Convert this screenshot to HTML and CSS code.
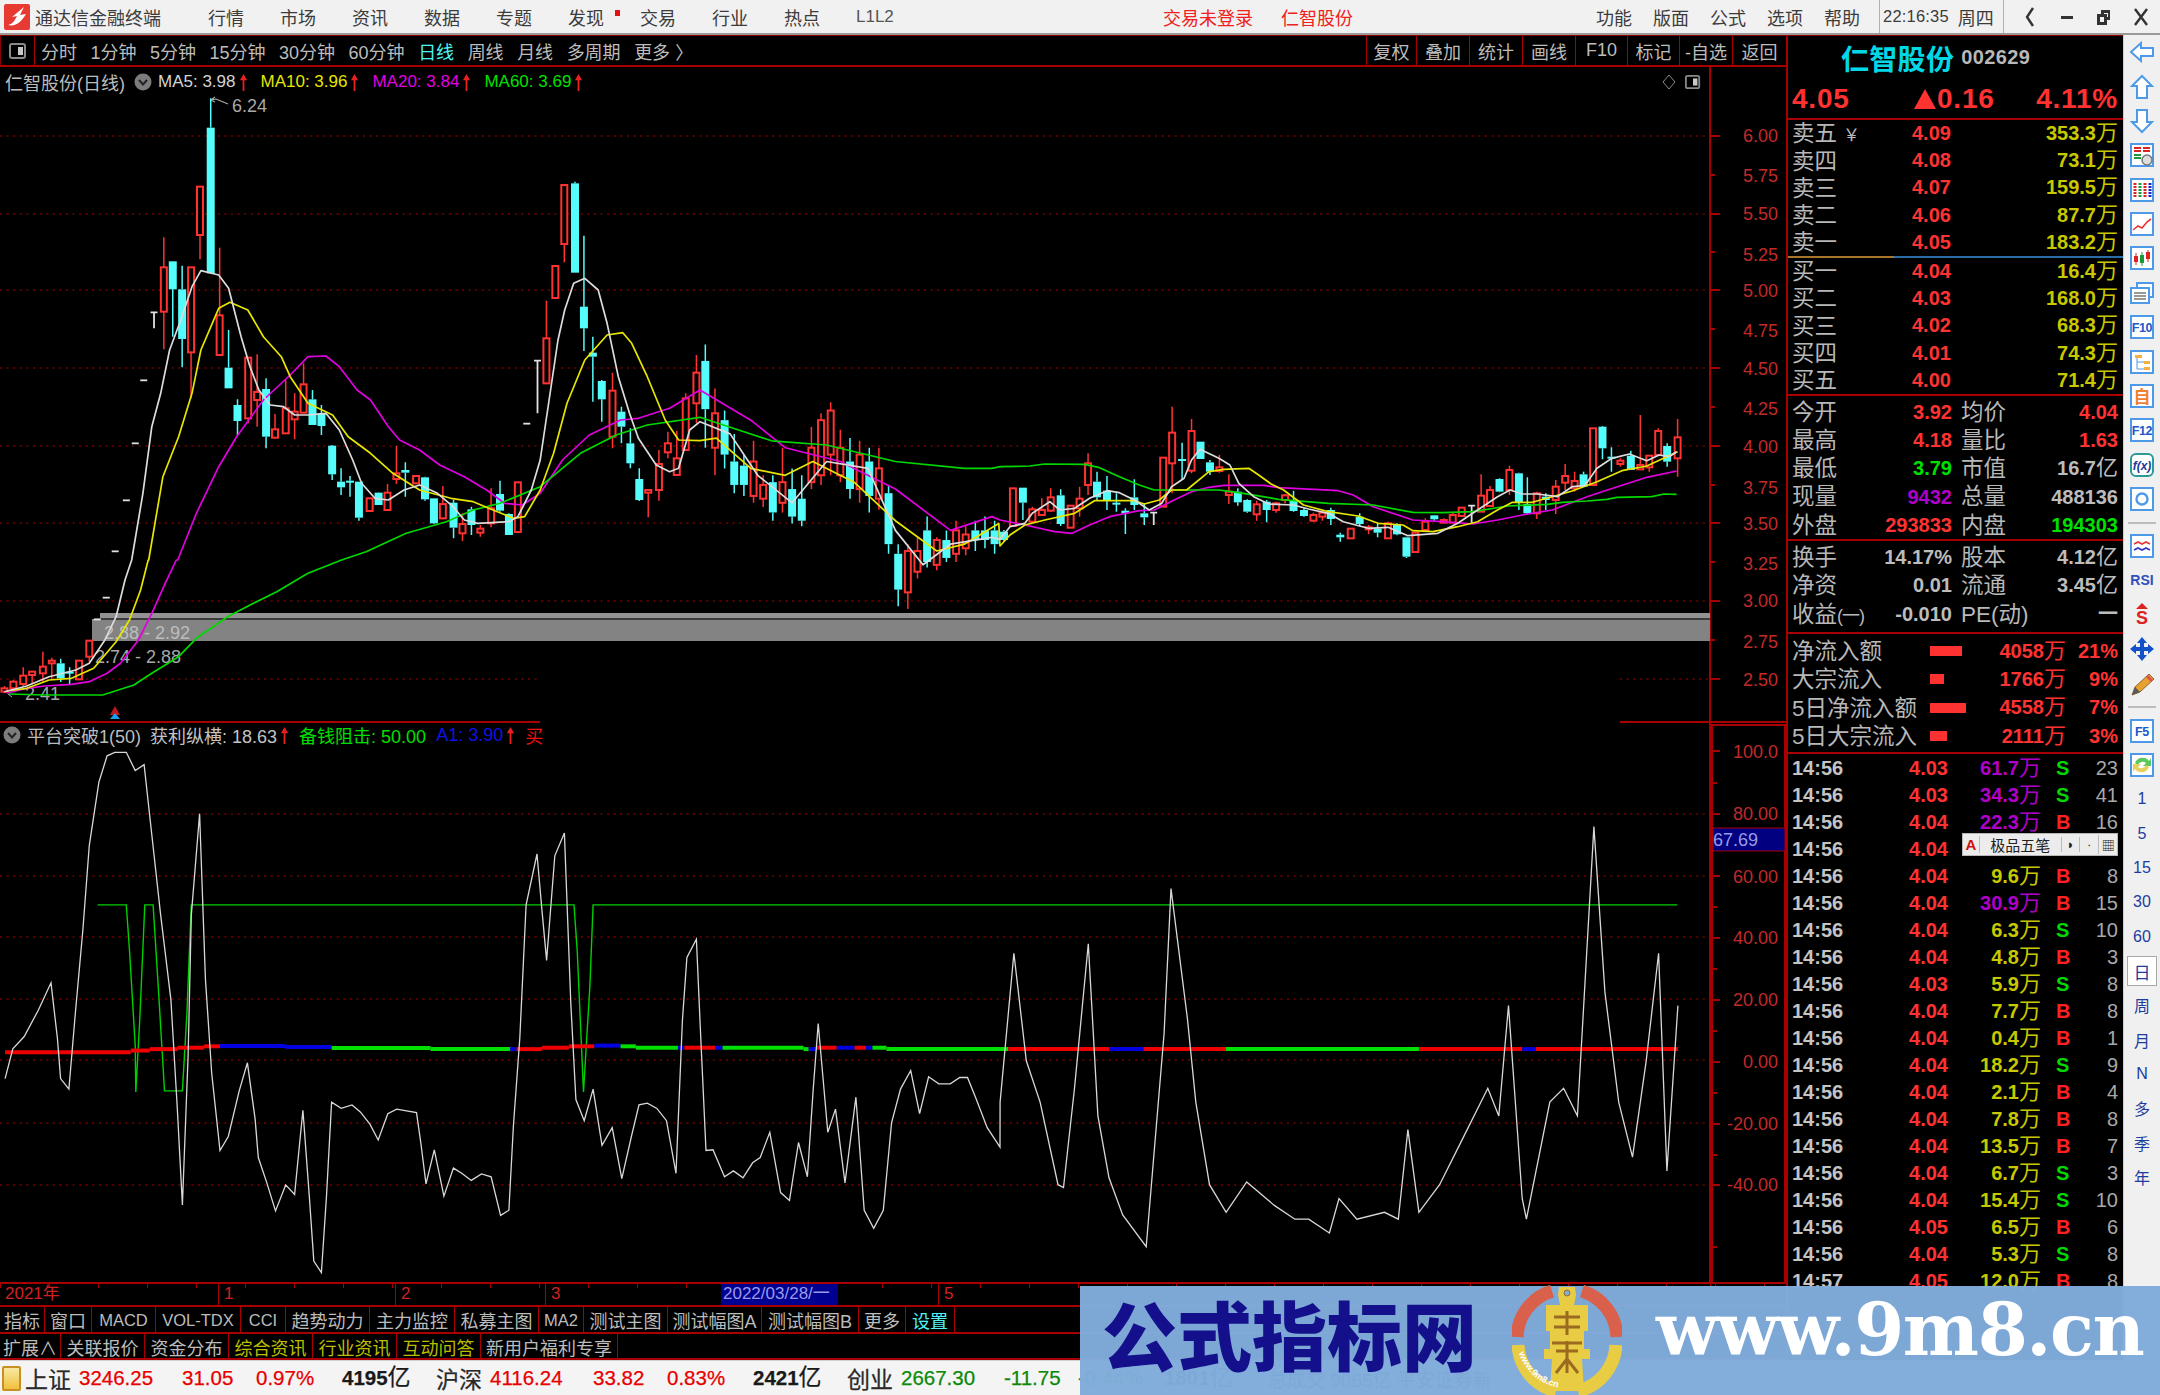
FILE: index.html
```html
<!DOCTYPE html>
<html lang="zh-CN">
<head>
<meta charset="utf-8">
<title>通达信金融终端</title>
<link rel="stylesheet" href="styles.css">
</head>
<body>
<svg class="defs" width="0" height="0" aria-hidden="true">
  <defs>
    <symbol id="up" viewBox="0 0 10 20"><path d="M5 1 L9 8 H6 V20 H4 V8 H1 Z" fill="#e82020"/></symbol>
    <symbol id="fold" viewBox="0 0 18 18"><circle cx="9" cy="9" r="8.5" fill="#7c7c7c"/><path d="M5 7 L9 11.5 L13 7" fill="none" stroke="#222" stroke-width="2"/></symbol>
    <symbol id="frame" viewBox="0 0 26 26"><rect x="2" y="2" width="22" height="22" fill="#fff" stroke="#4d9be8" stroke-width="2"/></symbol>
  </defs>
</svg>
<div class="app">
  <header class="titlebar">
    <svg class="logo" viewBox="0 0 26 26"><rect width="26" height="26" rx="2" fill="#e63a32"/><path d="M4 21 C9 20 11 16 13 12 L8 13 L20 3 L16 11 L22 10 C18 17 12 23 4 21 Z" fill="#fff"/></svg>
    <span class="appname">通达信金融终端</span>
    <nav class="menu">
      <span>行情</span><span>市场</span><span>资讯</span><span>数据</span><span>专题</span><span class="dot">发现</span><span>交易</span><span>行业</span><span>热点</span><span class="l1">L1L2</span>
    </nav>
    <span class="warn w1">交易未登录</span>
    <span class="warn w2">仁智股份</span>
    <nav class="menu2"><span>功能</span><span>版面</span><span>公式</span><span>选项</span><span>帮助</span></nav>
    <div class="clock"><span>22:16:35</span><span>周四</span></div>
    <div class="winbtns">
      <svg viewBox="0 0 16 24"><path d="M11 3 L5 12 L11 21" fill="none" stroke="#333" stroke-width="2.4"/></svg>
      <svg viewBox="0 0 16 24"><rect x="2" y="11" width="12" height="3" fill="#333"/></svg>
      <svg viewBox="0 0 16 24"><path d="M5 5 H14 V15 H11 V20 H1 V9 H5 Z M4 12 V17 H8 V12 Z M8 8 V9 H11 V12 H12 V8 Z" fill="#333" fill-rule="evenodd"/></svg>
      <svg viewBox="0 0 16 24"><path d="M2 4 L14 20 M14 4 L2 20" stroke="#333" stroke-width="2.4"/></svg>
    </div>
  </header>

  <div class="workspace">
    <main class="main">
      <div class="toolbar">
        <div class="tb-icon"><svg viewBox="0 0 18 18"><rect x="1" y="2" width="15" height="14" rx="2" fill="none" stroke="#8a8a8a" stroke-width="2"/><rect x="9" y="5" width="5" height="8" fill="#c8c8c8"/></svg></div>
        <div class="tb-tabs">
          <span>分时</span><span>1分钟</span><span>5分钟</span><span>15分钟</span><span>30分钟</span><span>60分钟</span><span class="on">日线</span><span>周线</span><span>月线</span><span>多周期</span><span>更多 〉</span>
        </div>
        <div class="tb-right">
          <span>复权</span><span>叠加</span><span>统计</span><span>画线</span><span>F10</span><span>标记</span><span>-自选</span><span>返回</span>
        </div>
      </div>

      <div class="chart">
        <svg id="kchart" class="chart-svg" viewBox="0 67 1786 1215" preserveAspectRatio="none">
          <path class="grid" d="M0 136H1710M0 214H1710M0 290H1710M0 368H1710M0 446H1710M0 523H1710M0 601H1710M0 679H540M1620 679H1710"/>
          <path class="grid" d="M0 814H1710M0 876H1710M0 937H1710M0 999H1710M0 1060H1710M0 1123H1710M0 1185H1710"/>
          <path class="axis" d="M1710 67V1282"/>
          <path class="axis" d="M1711 136h9M1711 214h9M1711 290h9M1711 368h9M1711 446h9M1711 523h9M1711 601h9M1711 679h9M1711 175h4M1711 252h4M1711 329h4M1711 407h4M1711 485h4M1711 562h4M1711 640h4"/>
          <path class="axis" d="M0 722H540M1620 722H1786"/>
          <rect class="axisbox" x="1712" y="725" width="73" height="558"/>
          <path class="axis" d="M1713 751h7M1713 814h7M1713 876h7M1713 938h7M1713 1000h7M1713 1062h7M1713 1124h7M1713 1185h7M1713 783h4M1713 845h4M1713 907h4M1713 969h4M1713 1031h4M1713 1093h4M1713 1155h4M1713 1247h4"/>

          <g class="band">
            <rect class="band-light" x="100" y="613" width="1610" height="5"/>
            <rect class="band-dark" x="100" y="618" width="1610" height="2"/>
            <rect class="band-main" x="92" y="620" width="1618" height="21"/>
            <rect class="band-light" x="92" y="619" width="8" height="2"/>
          </g>
          <text class="bandlbl" x="104" y="639">2.88 - 2.92</text>
          <text class="marklbl" x="95" y="663">2.74 - 2.88</text>
          <text class="marklbl" x="25" y="700">2.41</text>
          <text class="marklbl" x="232" y="112">6.24</text>
          <path class="markline" d="M211 100L216 99L228 104M211 100L215 97M211 100L215 102"/>
          <path class="marklinet" d="M8 694L12 697"/>

          <g id="candles"></g>
          <g id="lines"></g>

          <path class="sig-r" d="M115 706L120 715H110Z"/>
          <path class="sig-b" d="M115 713L120 719H110Z"/>

          <g class="axlbl">
            <text x="1778" y="142">6.00</text><text x="1778" y="182">5.75</text><text x="1778" y="220">5.50</text><text x="1778" y="261">5.25</text><text x="1778" y="297">5.00</text><text x="1778" y="337">4.75</text><text x="1778" y="375">4.50</text><text x="1778" y="415">4.25</text><text x="1778" y="453">4.00</text><text x="1778" y="494">3.75</text><text x="1778" y="530">3.50</text><text x="1778" y="570">3.25</text><text x="1778" y="607">3.00</text><text x="1778" y="648">2.75</text><text x="1778" y="686">2.50</text>
            <text x="1778" y="758">100.0</text><text x="1778" y="820">80.00</text><text x="1778" y="883">60.00</text><text x="1778" y="944">40.00</text><text x="1778" y="1006">20.00</text><text x="1778" y="1068">0.00</text><text x="1778" y="1130">-20.00</text><text x="1778" y="1191">-40.00</text>
          </g>
          <rect class="lastbox" x="1713" y="828" width="72" height="23"/>
          <text class="lastlbl" x="1713" y="846">67.69</text>
        </svg>

        <div class="legend legend-top">
          <span class="lg-title">仁智股份(日线)</span>
          <svg class="fold"><use href="#fold"/></svg>
          <span class="lg-item c-white">MA5: 3.98<svg class="uparr"><use href="#up"/></svg></span>
          <span class="lg-item c-yellow">MA10: 3.96<svg class="uparr"><use href="#up"/></svg></span>
          <span class="lg-item c-magenta">MA20: 3.84<svg class="uparr"><use href="#up"/></svg></span>
          <span class="lg-item c-green">MA60: 3.69<svg class="uparr"><use href="#up"/></svg></span>
        </div>
        <div class="legend-ctl">
          <svg viewBox="0 0 14 16"><path d="M7 1 L13 8 L7 15 L1 8 Z" fill="none" stroke="#8a8a8a"/></svg>
          <svg viewBox="0 0 18 18"><rect x="1" y="2" width="15" height="14" rx="2" fill="none" stroke="#8a8a8a" stroke-width="2"/><rect x="9" y="5" width="5" height="8" fill="#c8c8c8"/></svg>
        </div>
        <div class="legend legend-sub">
          <svg class="fold"><use href="#fold"/></svg>
          <span class="lg-title">平台突破1(50)</span>
          <span class="lg-item c-gray">获利纵横: 18.63<svg class="uparr"><use href="#up"/></svg></span>
          <span class="lg-item c-green">备钱阻击: 50.00</span>
          <span class="lg-item c-blue">A1: 3.90<svg class="uparr"><use href="#up"/></svg></span>
          <span class="c-red">买</span>
        </div>
      </div>

      <div class="timeaxis">
        <span>2021年</span><span>1</span><span>2</span><span>3</span><span class="datebox">2022/03/28/一</span><span class="blank"></span><span>5</span><span class="fill"></span><span class="axisend"></span>
      </div>
      <div class="tabrow tabs-a">
        <span>指标</span><span>窗口</span><span>MACD</span><span>VOL-TDX</span><span>CCI</span><span>趋势动力</span><span>主力监控</span><span>私募主图</span><span>MA2</span><span>测试主图</span><span>测试幅图A</span><span>测试幅图B</span><span>更多</span><span class="cy">设置</span>
      </div>
      <div class="tabrow tabs-b">
        <span>扩展∧</span><span>关联报价</span><span>资金分布</span><span class="ol">综合资讯</span><span class="ol">行业资讯</span><span class="ol">互动问答</span><span>新用户福利专享</span>
      </div>
    </main>

    <aside class="quote">
      <div class="q-name"><span class="q-cn">仁智股份</span><span class="q-code">002629</span></div>
      <div class="q-price"><span>4.05</span><span class="q-chg"><i class="tri"></i>0.16</span><span>4.11%</span></div>

      <section class="book">
        <div class="brow"><b>卖五<small>￥</small></b><em>4.09</em><span>353.3<u>万</u></span></div>
        <div class="brow"><b>卖四</b><em>4.08</em><span>73.1<u>万</u></span></div>
        <div class="brow"><b>卖三</b><em>4.07</em><span>159.5<u>万</u></span></div>
        <div class="brow"><b>卖二</b><em>4.06</em><span>87.7<u>万</u></span></div>
        <div class="brow"><b>卖一</b><em>4.05</em><span>183.2<u>万</u></span></div>
        <div class="bdiv"></div>
        <div class="brow"><b>买一</b><em>4.04</em><span>16.4<u>万</u></span></div>
        <div class="brow"><b>买二</b><em>4.03</em><span>168.0<u>万</u></span></div>
        <div class="brow"><b>买三</b><em>4.02</em><span>68.3<u>万</u></span></div>
        <div class="brow"><b>买四</b><em>4.01</em><span>74.3<u>万</u></span></div>
        <div class="brow"><b>买五</b><em>4.00</em><span>71.4<u>万</u></span></div>
      </section>

      <section class="stats s5">
        <b>今开</b><em class="r">3.92</em><b>均价</b><em class="r">4.04</em>
        <b>最高</b><em class="r">4.18</em><b>量比</b><em class="r">1.63</em>
        <b>最低</b><em class="g">3.79</em><b>市值</b><em class="w">16.7<u>亿</u></em>
        <b>现量</b><em class="p">9432</em><b>总量</b><em class="w">488136</em>
        <b>外盘</b><em class="r">293833</em><b>内盘</b><em class="g">194303</em>
      </section>
      <section class="stats s3">
        <b>换手</b><em class="w">14.17%</em><b>股本</b><em class="w">4.12<u>亿</u></em>
        <b>净资</b><em class="w">0.01</em><b>流通</b><em class="w">3.45<u>亿</u></em>
        <b>收益<small>(一)</small></b><em class="w">-0.010</em><b>PE(动)</b><em class="w">一</em>
      </section>

      <section class="flow">
        <div class="frow"><b>净流入额</b><i class="bar b32"></i><span>4058<u>万</u></span><span>21%</span></div>
        <div class="frow"><b>大宗流入</b><i class="bar b14"></i><span>1766<u>万</u></span><span>9%</span></div>
        <div class="frow"><b>5日净流入额</b><i class="bar b36"></i><span>4558<u>万</u></span><span>7%</span></div>
        <div class="frow"><b>5日大宗流入</b><i class="bar b17"></i><span>2111<u>万</u></span><span>3%</span></div>
      </section>

      <section class="trades">
        <div class="trow"><b>14:56</b><em>4.03</em><span class="pu">61.7<u>万</u></span><i class="s">S</i><small>23</small></div>
        <div class="trow"><b>14:56</b><em>4.03</em><span class="pu">34.3<u>万</u></span><i class="s">S</i><small>41</small></div>
        <div class="trow"><b>14:56</b><em>4.04</em><span class="pu">22.3<u>万</u></span><i>B</i><small>16</small></div>
        <div class="trow"><b>14:56</b><em>4.04</em></div>
        <div class="trow"><b>14:56</b><em>4.04</em><span>9.6<u>万</u></span><i>B</i><small>8</small></div>
        <div class="trow"><b>14:56</b><em>4.04</em><span class="pu">30.9<u>万</u></span><i>B</i><small>15</small></div>
        <div class="trow"><b>14:56</b><em>4.04</em><span>6.3<u>万</u></span><i class="s">S</i><small>10</small></div>
        <div class="trow"><b>14:56</b><em>4.04</em><span>4.8<u>万</u></span><i>B</i><small>3</small></div>
        <div class="trow"><b>14:56</b><em>4.03</em><span>5.9<u>万</u></span><i class="s">S</i><small>8</small></div>
        <div class="trow"><b>14:56</b><em>4.04</em><span>7.7<u>万</u></span><i>B</i><small>8</small></div>
        <div class="trow"><b>14:56</b><em>4.04</em><span>0.4<u>万</u></span><i>B</i><small>1</small></div>
        <div class="trow"><b>14:56</b><em>4.04</em><span>18.2<u>万</u></span><i class="s">S</i><small>9</small></div>
        <div class="trow"><b>14:56</b><em>4.04</em><span>2.1<u>万</u></span><i>B</i><small>4</small></div>
        <div class="trow"><b>14:56</b><em>4.04</em><span>7.8<u>万</u></span><i>B</i><small>8</small></div>
        <div class="trow"><b>14:56</b><em>4.04</em><span>13.5<u>万</u></span><i>B</i><small>7</small></div>
        <div class="trow"><b>14:56</b><em>4.04</em><span>6.7<u>万</u></span><i class="s">S</i><small>3</small></div>
        <div class="trow"><b>14:56</b><em>4.04</em><span>15.4<u>万</u></span><i class="s">S</i><small>10</small></div>
        <div class="trow"><b>14:56</b><em>4.05</em><span>6.5<u>万</u></span><i>B</i><small>6</small></div>
        <div class="trow"><b>14:56</b><em>4.04</em><span>5.3<u>万</u></span><i class="s">S</i><small>8</small></div>
        <div class="trow"><b>14:57</b><em>4.05</em><span>12.0<u>万</u></span><i>B</i><small>8</small></div>
      </section>
    </aside>

    <nav class="iconbar">
      <svg class="ic" viewBox="0 0 26 26"><path d="M2 13 L12 4 V9 H24 V17 H12 V22 Z" fill="#fff" stroke="#4d9be8" stroke-width="2"/></svg>
      <svg class="ic" viewBox="0 0 26 26"><path d="M13 2 L23 12 H18 V24 H8 V12 H3 Z" fill="#fff" stroke="#4d9be8" stroke-width="2"/></svg>
      <svg class="ic" viewBox="0 0 26 26"><path d="M13 24 L23 14 H18 V2 H8 V14 H3 Z" fill="#fff" stroke="#4d9be8" stroke-width="2"/></svg>
      <svg class="ic" viewBox="0 0 26 26"><use href="#frame"/><path d="M5 6h7M5 9h7M14 6h7M14 9h7" stroke="#d22" stroke-width="2"/><path d="M5 13h7M5 16h7" stroke="#1a9a3a" stroke-width="2"/><circle cx="18" cy="18" r="5" fill="#ddd" stroke="#777" stroke-width="1.5"/></svg>
      <svg class="ic" viewBox="0 0 26 26"><use href="#frame"/><path d="M6 6V20" stroke="#d22" stroke-width="3" stroke-dasharray="2 1"/><path d="M11 6V20" stroke="#1a9a3a" stroke-width="3" stroke-dasharray="2 1"/><path d="M16 6V20" stroke="#d22" stroke-width="3" stroke-dasharray="2 1"/><path d="M21 6V20" stroke="#22c" stroke-width="3" stroke-dasharray="2 1"/></svg>
      <svg class="ic" viewBox="0 0 26 26"><use href="#frame"/><path d="M4 19 L9 15 L13 17 L18 11 L22 8" fill="none" stroke="#e33" stroke-width="1.6"/></svg>
      <svg class="ic" viewBox="0 0 26 26"><use href="#frame"/><path d="M7 8V20M19 5V17" stroke="#d22"/><path d="M13 7V21" stroke="#1a9a3a"/><rect x="5" y="11" width="4" height="6" fill="#d22"/><rect x="11" y="10" width="4" height="8" fill="#1a9a3a"/><rect x="17" y="7" width="4" height="7" fill="#d22"/></svg>
      <svg class="ic" viewBox="0 0 26 26"><path d="M8 7V3H24V17H20" fill="#fff" stroke="#4d9be8" stroke-width="2"/><rect x="2" y="8" width="18" height="15" fill="#fff" stroke="#4d9be8" stroke-width="2"/><path d="M5 13h12M5 16h12M5 19h12" stroke="#777" stroke-width="1.5"/></svg>
      <svg class="ic" viewBox="0 0 26 26"><use href="#frame"/><text class="ic-t" x="13" y="18">F10</text></svg>
      <svg class="ic" viewBox="0 0 26 26"><use href="#frame"/><path d="M6 6H13V9H6ZM15 12H21V15H15ZM15 18H21V21H15Z" fill="#f5b040"/><path d="M8 9V20H15M8 13H15" fill="none" stroke="#4d9be8"/></svg>
      <svg class="ic" viewBox="0 0 26 26"><use href="#frame"/><text class="ic-z" x="13" y="20">自</text></svg>
      <svg class="ic" viewBox="0 0 26 26"><use href="#frame"/><text class="ic-t" x="13" y="18">F12</text></svg>
      <svg class="ic" viewBox="0 0 26 26"><rect x="2" y="2" width="22" height="22" rx="5" fill="#fff" stroke="#2a9a9a" stroke-width="2"/><text class="ic-fx" x="13" y="18">f(x)</text></svg>
      <svg class="ic" viewBox="0 0 26 26"><use href="#frame"/><circle cx="13" cy="13" r="5.5" fill="none" stroke="#4d9be8" stroke-width="2.4"/></svg>
      <i class="ic-sep"></i>
      <svg class="ic" viewBox="0 0 26 26"><use href="#frame"/><path d="M5 11 L9 9 L13 11 L17 9 L21 11" fill="none" stroke="#e33" stroke-width="1.6"/><path d="M5 17 L9 15 L13 17 L17 15 L21 17" fill="none" stroke="#33c" stroke-width="1.6"/></svg>
      <svg class="ic" viewBox="0 0 26 26"><text class="ic-rsi" x="13" y="18">RSI</text></svg>
      <svg class="ic" viewBox="0 0 26 26"><path d="M13 1 L19 7 H7 Z" fill="#d22"/><text class="ic-s" x="13" y="22">S</text></svg>
      <svg class="ic" viewBox="0 0 26 26"><path d="M13 1 L18 7 H15 V11 H19 V8 L25 13 L19 18 V15 H15 V19 H18 L13 25 L8 19 H11 V15 H7 V18 L1 13 L7 8 V11 H11 V7 H8 Z" fill="#1450c8"/></svg>
      <svg class="ic" viewBox="0 0 26 26"><path d="M3 24 L6 16 L20 3 L25 8 L11 21 Z" fill="#e8a030" stroke="#8a6a30"/><path d="M3 24 L6 16 L11 21 Z" fill="#5a5a5a"/><path d="M18 5 L23 10" stroke="#e05050" stroke-width="3"/></svg>
      <i class="ic-sep"></i>
      <svg class="ic" viewBox="0 0 26 26"><use href="#frame"/><text class="ic-t" x="13" y="18">F5</text></svg>
      <svg class="ic" viewBox="0 0 26 26"><use href="#frame"/><path d="M6 11 A8 8 0 0 1 20 9 L22 6 V14 H14 L17 11 A5 5 0 0 0 9 13 Z" fill="#5ac85a"/><path d="M20 15 A8 8 0 0 1 6 17 L4 20 V12 H12 L9 15 A5 5 0 0 0 17 13 Z" fill="#e8d060"/></svg>
      <span class="per">1</span><span class="per">5</span><span class="per">15</span><span class="per">30</span><span class="per">60</span>
      <span class="per per-on">日</span><span class="per">周</span><span class="per">月</span><span class="per">N</span><span class="per">多</span><span class="per">季</span><span class="per">年</span>
    </nav>
  </div>

  <footer class="status">
    <i class="s-icon"></i>
    <span class="s-name">上证</span><span class="s-idx up">3246.25</span><span class="s-chg up">31.05</span><span class="s-pct up">0.97%</span><span class="s-amt">4195<u>亿</u></span>
    <span class="s-name">沪深</span><span class="s-idx up">4116.24</span><span class="s-chg up">33.82</span><span class="s-pct up">0.83%</span><span class="s-amt">2421<u>亿</u></span>
    <span class="s-name">创业</span><span class="s-idx dn">2667.30</span><span class="s-chg dn">-11.75</span><span class="s-pct dn">-0.44%</span><span class="s-amt">1801<u>亿</u></span>
    <span class="s-tail">总成交 9065亿 平安证券新</span>
  </footer>

  <div class="ime">
    <span class="ime-a">A</span><span class="ime-t">极品五笔</span><span class="ime-b">◗</span><span class="ime-b">∙</span><span class="ime-b">▦</span>
  </div>

  <div class="banner">
    <span class="bn-title">公式指标网</span>
    <svg class="bn-logo" viewBox="0 0 110 110">
      <path class="lg-r" d="M5 52 A50 50 0 0 1 40 6"/>
      <path class="lg-r" d="M105 52 A50 50 0 0 0 70 6"/>
      <path class="lg-y" d="M6 60 A50 50 0 0 0 44 106"/>
      <path class="lg-y" d="M104 60 A50 50 0 0 1 66 106"/>
      <path class="lg-fig" d="M47 2 H63 L64 10 L62 20 H76 V46 H72 V64 H78 V74 H70 L72 106 H38 L40 74 H32 V64 H38 V46 H34 V20 H48 L46 10 Z"/>
      <path class="lg-fig2" d="M42 32 H68 M42 42 H68 M55 26 V50 M40 58 H70 M44 66 H66 M55 56 V88 M44 88 L55 74 L66 88"/>
      <circle class="lg-head" cx="55" cy="8" r="3"/>
      <defs><path id="lgarc" d="M7 68 A50 50 0 0 0 44 102"/></defs>
      <text class="lg-txt"><textPath href="#lgarc">www.9m8.cn</textPath></text>
    </svg>
    <span class="bn-url">www.9m8.cn</span>
  </div>
</div>
<script src="chart.js"></script>
</body>
</html>
```

FILE: styles.css
```css
* { box-sizing: border-box; }
html, body { margin: 0; padding: 0; background: #000; }
body { width: 2160px; height: 1395px; overflow: hidden; font-family: "Liberation Sans", "Noto Sans CJK SC", sans-serif; }
.defs { position: absolute; }
i, em, b, u, small { font-style: normal; text-decoration: none; font-weight: normal; }

.app { position: relative; width: 2160px; height: 1395px; display: flex; flex-direction: column; overflow: hidden; }

/* title bar */
.titlebar { height: 35px; flex: none; display: flex; align-items: center; background: #f1f1f1; border-bottom: 2px solid #9a9a9a; color: #3c3c3c; font-size: 18px; padding-left: 4px; }
.logo { width: 26px; height: 26px; flex: none; }
.appname { margin-left: 5px; width: 126px; white-space: nowrap; }
.menu { margin-left: 47px; display: flex; align-items: center; gap: 36px; width: 720px; }
.menu span { width: 36px; white-space: nowrap; position: relative; }
.menu .dot::after { content: ""; position: absolute; left: 47px; top: 6px; width: 5px; height: 6px; background: #e81010; }
.menu .l1 { font-size: 17px; color: #555; }
.warn { color: #f02020; white-space: nowrap; }
.w1 { margin-left: 235px; width: 118px; }
.w2 { width: 80px; }
.menu2 { margin-left: 235px; display: flex; gap: 21px; }
.menu2 span { width: 36px; white-space: nowrap; }
.clock { margin-left: 19px; height: 33px; width: 125px; display: flex; align-items: center; gap: 9px; padding-left: 3px; border-left: 1px solid #b0b0b0; border-right: 1px solid #b0b0b0; white-space: nowrap; }
.clock span:first-child { font-size: 16.5px; letter-spacing: .2px; }
.winbtns { margin-left: 18px; display: flex; gap: 21px; }
.winbtns svg { width: 16px; height: 24px; }

/* layout */
.workspace { flex: 1; min-height: 0; display: flex; }
.main { width: 1786px; flex: none; display: flex; flex-direction: column; background: #000; }

/* toolbar */
.toolbar { height: 32px; flex: none; display: flex; background: #000; border-top: 1px solid #8c0000; border-bottom: 2px solid #a80000; color: #bcbcbc; font-size: 18px; }
.tb-icon { width: 35px; border-left: 1px solid #8c0000; border-right: 1px solid #a80000; display: flex; align-items: center; justify-content: center; }
.tb-icon svg { width: 18px; height: 18px; }
.tb-tabs { display: flex; gap: 13.5px; padding-left: 6px; align-items: center; white-space: nowrap; }
.tb-tabs .on { color: #4cf4f4; }
.tb-right { margin-left: auto; display: grid; grid-template-columns: 50px 53px 53px 53px 52px 52px 53px 54px; width: 420px; }
.tb-right span { border-left: 1px solid #a80000; display: flex; align-items: center; justify-content: center; white-space: nowrap; }

/* chart */
.chart { position: relative; flex: 1; min-height: 0; }
.chart-svg { display: block; width: 100%; height: 100%; }
.grid { stroke: #b00000; stroke-width: 1.2; stroke-dasharray: 2 4.6; fill: none; }
.axis { stroke: #a80000; stroke-width: 2; fill: none; }
.axisbox { fill: none; stroke: #a80000; stroke-width: 2; }
.band-light { fill: #929292; }
.band-dark { fill: #3a3a3a; }
.band-main { fill: #838383; }
.bandlbl { fill: #bdbdbd; font-size: 18px; }
.marklbl { fill: #a8a8a8; font-size: 18px; }
.markline { stroke: #a8a8a8; fill: none; stroke-width: 1.2; }
.marklinet { stroke: #a8a8a8; fill: none; }
.sig-r { fill: #c01818; }
.sig-b { fill: #18a0f0; }
.axlbl text { fill: #c22a2a; font-size: 18px; text-anchor: end; }
.lastbox { fill: #000080; stroke: #a80000; }
.lastlbl { fill: #9a9ae8; font-size: 18px; }

.c-body { fill: #000; stroke: #ff3232; stroke-width: 2; }
.c-fill { fill: #54fcfc; }
.w-red { stroke: #ff3232; stroke-width: 1.5; fill: none; }
.w-cy { stroke: #54fcfc; stroke-width: 1.5; fill: none; }
.w-wh { stroke: #e0e0e0; stroke-width: 1.8; fill: none; }
.ma { fill: none; stroke-width: 1.7; stroke-linejoin: round; }
.ma-w { stroke: #dcdcdc; }
.ma-y { stroke: #e6e600; }
.ma-m { stroke: #e000e0; }
.ma-g { stroke: #00d800; }
.sub-w { fill: none; stroke: #d8d8d8; stroke-width: 1.3; }
.sub-g { fill: none; stroke: #00d000; stroke-width: 1.4; }
.seg { fill: none; stroke-width: 4; }
.seg-r { stroke: #f00000; }
.seg-b { stroke: #0000e0; }
.seg-g { stroke: #00e000; }

.legend { position: absolute; display: flex; align-items: center; font-size: 17px; white-space: nowrap; color: #bcbcbc; }
.legend-top { left: 5px; top: 3px; height: 24px; }
.legend-sub { left: 3px; top: 656px; height: 24px; font-size: 18px; }
.lg-title { font-size: 18px; }
.fold { width: 18px; height: 18px; flex: none; }
.legend-top .fold { margin: 0 6px 0 9px; }
.legend-sub .fold { margin-right: 6px; }
.legend-sub .lg-title { margin-right: 9px; }
.lg-item { display: inline-flex; align-items: center; margin-right: 13px; }
.legend-sub .lg-item { margin-right: 10px; }
.uparr { width: 9px; height: 18px; margin-left: 3px; }
.c-white { color: #d4d4d4; }
.c-gray { color: #c4c4c4; }
.c-yellow { color: #e6e600; }
.c-magenta { color: #e000e0; }
.c-green { color: #00e000; }
.c-blue { color: #1010e8; }
.c-red { color: #f01010; }
.legend-ctl { position: absolute; left: 1661px; top: 7px; display: flex; gap: 8px; align-items: center; }
.legend-ctl svg { width: 16px; height: 16px; }

/* time axis and tabs */
.timeaxis { height: 23px; flex: none; display: grid; grid-template-columns: 218px 177px 150px 176px 117px 100px 142px 630px 76px; border-top: 2px solid #a80000; color: #d02020; font-size: 17px; background-image: repeating-linear-gradient(90deg, #a80000 0 1px, transparent 1px 49px); background-size: 100% 4px; background-repeat: no-repeat; }
.timeaxis span { padding-left: 5px; line-height: 20px; border-left: 1px solid #a80000; white-space: nowrap; }
.timeaxis span:first-child { border-left: 0; }
.timeaxis .datebox { background: #000090; color: #9a9ae8; padding-left: 2px; border: 0; }
.timeaxis .blank, .timeaxis .fill { border-left: 0; }
.tabrow { height: 27px; flex: none; display: grid; border-top: 2px solid #a80000; color: #bcbcbc; font-size: 18px; }
.tabrow span { display: flex; align-items: center; justify-content: center; border-right: 1px solid #a80000; white-space: nowrap; }
.tabs-a { grid-template-columns: 45px 47px 64px 85px 45px 84px 85px 84px 45px 84px 94px 97px 47px 49px; }
.tabs-b { grid-template-columns: 61px 84px 84px 84px 84px 84px 137px; border-bottom: 2px solid #a80000; height: 28px; }
.tabs-a span:nth-child(3), .tabs-a span:nth-child(4), .tabs-a span:nth-child(5), .tabs-a span:nth-child(9) { font-size: 16.5px; }
.tabrow .cy { color: #4cf4f4; }
.tabrow .ol { color: #bcbc00; }

/* quote panel */
.quote { width: 337px; flex: none; background: #000; border-left: 2px solid #a80000; border-top: 1px solid #8c0000; color: #bcbcbc; overflow: hidden; display: flex; flex-direction: column; }
.q-name { height: 43px; flex: none; display: flex; align-items: center; padding-left: 53px; gap: 7px; }
.q-cn { font-size: 28px; font-weight: 700; color: #00d8e8; letter-spacing: .3px; }
.q-code { font-size: 20px; font-weight: 700; color: #b8b8b8; letter-spacing: .4px; }
.q-price { height: 41px; flex: none; display: grid; grid-template-columns: 122px 120px 1fr; align-items: center; padding: 0 5px 0 4px; font-size: 28px; font-weight: 700; color: #ff3232; letter-spacing: .8px; border-bottom: 2px solid #a80000; }
.q-price span:last-child { text-align: right; }
.q-chg { display: flex; align-items: center; }
.tri { width: 0; height: 0; border-left: 11px solid transparent; border-right: 11px solid transparent; border-bottom: 20px solid #ff3232; margin-right: 1px; }

.book { flex: none; border-bottom: 2px solid #a80000; }
.brow { height: 27.2px; display: grid; grid-template-columns: 120px 1fr auto; align-items: center; padding: 0 5px 0 4px; }
.brow b, .stats b, .frow b { font-size: 22.5px; color: #b8b8b8; line-height: 1; white-space: nowrap; padding-top: 2px; }
.brow small { font-size: 17px; margin-left: 6px; }
.brow em { font-size: 20px; font-weight: 700; color: #ff3232; }
.brow span { font-size: 20px; font-weight: 700; color: #c8c800; }
.brow u, .stats u, .frow u, .trow u, .s-amt u { font-weight: 400; font-size: 22px; line-height: 1; }
.bdiv { height: 2px; background: linear-gradient(90deg, #a8742a 0 106px, #2a6ca8 106px); }

.stats { flex: none; display: grid; grid-template-columns: 66px 94px 75px 1fr; align-items: center; padding: 0 5px 0 4px; border-bottom: 2px solid #a80000; }
.s5 { height: 145px; padding-top: 2px; }
.s3 { height: 93px; padding-top: 2px; grid-auto-rows: 28.4px; align-content: start; }
.stats b:nth-child(4n+3) { padding-left: 9px; }
.stats b small { font-size: 18px; letter-spacing: -1px; }
.stats em { font-size: 20px; font-weight: 700; text-align: right; white-space: nowrap; line-height: 1; }
.stats .r { color: #ff3232; }
.stats .g { color: #00e000; }
.stats .p { color: #b000c8; }
.stats .w { color: #bcbcbc; }

.flow { flex: none; height: 120px; border-bottom: 2px solid #a80000; padding-top: 3px; }
.frow { height: 28.4px; display: grid; grid-template-columns: 138px 40px 96px 1fr; align-items: center; padding: 0 5px 0 4px; color: #ff3232; font-size: 20px; font-weight: 700; }
.frow b { white-space: nowrap; }
.frow span { text-align: right; white-space: nowrap; }
.bar { display: block; height: 10px; background: #ff3232; }
.b32 { width: 32px; }
.b14 { width: 14px; }
.b36 { width: 36px; }
.b17 { width: 17px; }

.trades { flex: 1; padding-top: 1px; }
.trow { height: 27px; display: grid; grid-template-columns: 56px 100px 93px 42px 1fr; align-items: center; padding: 0 5px 0 4px; font-size: 20px; font-weight: 700; }
.trow b { font-weight: 700; color: #c4c4c4; }
.trow em { font-weight: 700; color: #ff3232; text-align: right; }
.trow span { color: #c8c800; text-align: right; white-space: nowrap; }
.trow .pu { color: #b000c8; }
.trow i { font-weight: 700; color: #ff2020; padding-left: 15px; }
.trow .s { color: #00d800; }
.trow small { font-size: 20px; font-weight: 400; color: #a8a8a8; text-align: right; }

/* icon bar */
.iconbar { width: 37px; flex: none; background: #f0f0f0; border-left: 1px solid #d0d0d0; display: flex; flex-direction: column; align-items: center; }
.ic { width: 26px; height: 26px; flex: none; margin: 4.2px 0; }
.ic-sep { width: 28px; height: 2px; flex: none; margin: 5.3px 0; background: #bcbcbc; }
.ic-t { font-size: 12.5px; font-weight: 700; fill: #2058c8; text-anchor: middle; letter-spacing: -.4px; }
.ic-z { font-size: 17px; font-weight: 700; fill: #f08030; text-anchor: middle; }
.ic-fx { font-size: 12px; font-style: italic; font-weight: 700; fill: #203898; text-anchor: middle; }
.ic-rsi { font-size: 14px; font-weight: 700; fill: #3050b8; text-anchor: middle; }
.ic-s { font-size: 18px; font-weight: 700; fill: #d22; text-anchor: middle; }
.per { height: 34.4px; width: 30px; flex: none; display: flex; align-items: center; justify-content: center; font-size: 16px; color: #1c3ca0; }
.per-on { height: 30px; margin: 2px 0; background: #fff; border: 1px solid #a8a8a8; font-size: 17px; }

/* status bar */
.status { height: 35px; flex: none; display: flex; align-items: center; background: #f4f4f4; color: #1a1a1a; font-size: 20.5px; white-space: nowrap; padding-left: 2px; border-top: 1px solid #d0d0d0; -webkit-text-stroke: .25px currentColor; }
.s-icon { width: 19px; height: 25px; flex: none; margin-right: 4px; background: linear-gradient(#f8e8a0, #f0c040); border: 2px solid #c89020; border-radius: 2px; }
.s-name { width: 54px; font-size: 23px; color: #2a2a2a; flex: none; }
.s-idx { width: 103px; flex: none; }
.s-chg { width: 74px; flex: none; }
.s-pct { width: 86px; flex: none; }
.s-amt { width: 94px; flex: none; font-weight: 700; }
.s-amt u { font-size: 23px; }
.up { color: #e80000; }
.dn { color: #0a8a0a; }
.s-tail { font-size: 19px; margin-left: 10px; }

/* floating input-method bar */
.ime { position: absolute; left: 1962px; top: 833px; width: 156px; height: 23px; display: flex; align-items: center; background: #ececec; border: 1px solid #b8b8b8; font-size: 15px; color: #222; }
.ime-a { width: 17px; text-align: center; color: #d01010; font-weight: 700; border-right: 1px solid #bbb; }
.ime-t { width: 82px; text-align: center; }
.ime-b { width: 19px; text-align: center; border-left: 1px solid #bbb; font-size: 13px; }

/* watermark banner */
.banner { position: absolute; left: 1080px; top: 1286px; right: 0; bottom: 0; background: rgba(128, 172, 219, .975); display: flex; align-items: center; }
.bn-title { position: absolute; left: 22px; top: 8px; font-size: 75px; line-height: 90px; font-weight: 900; color: #14108c; white-space: nowrap; }
.bn-logo { position: absolute; left: 432px; top: -1px; width: 110px; height: 110px; }
.lg-r { fill: none; stroke: #d9604a; stroke-width: 13; }
.lg-y { fill: none; stroke: #e8cc44; stroke-width: 13; }
.lg-fig { fill: #e8cc44; }
.lg-fig2 { fill: none; stroke: #9a6a20; stroke-width: 3; }
.lg-head { fill: #80acdb; stroke: #9a6a20; }
.lg-txt { font-size: 9px; font-weight: 700; fill: #fff; }
.bn-url { position: absolute; left: 576px; top: 2px; font-family: "DejaVu Serif", serif; font-weight: 700; font-size: 72px; line-height: 84px; letter-spacing: -1.4px; color: #fff; white-space: nowrap; }
```

FILE: chart.js
```js
(function () {
  var NS = 'http://www.w3.org/2000/svg';
  var candlesG = document.getElementById('candles');
  var linesG = document.getElementById('lines');

  // Coordinate spaces the readings were taken in.
  var SP = {
    a: { x: function (v) { return v / 2.24; }, y: function (v) { return 560 + v / 3; } },
    b: { x: function (v) { return v / 2.24; }, y: function (v) { return 60 + v / 3; } },
    c: { x: function (v) { return v * 1.3776; }, y: function (v) { return v * 1.3776; } },
    d: { x: function (v) { return 1000 + v / 2.01; }, y: function (v) { return 340 + v / 3; } },
    e: { x: function (v) { return v / 1.568; }, y: function (v) { return 740 + v / 2.85; } }
  };

  // x, high, bodyTop, bodyBottom, low, kind: r red hollow, c cyan filled, w white
  var CANDLES = {
    a: [[10,378,385,395,400,'r'],[30,360,365,385,392,'r'],[52,322,347,372,378,'r'],[72,332,335,345,372,'r'],[96,275,320,340,365,'r'],[116,293,302,310,360,'r'],[136,296,310,355,366,'c'],[156,322,335,337,372,'c'],[177,300,302,358,360,'r'],[200,240,242,290,305,'r'],[218,178,178,179,179,'w'],[238,113,113,114,114,'w']],
    b: [[258,1474,1474,1475,1475,'w'],[283,1321,1321,1322,1322,'w'],[303,1150,1150,1151,1151,'w'],[322,961,961,962,962,'w'],[345,757,757,759,805,'w'],
      [367,532,622,755,868,'r'],[387,603,604,688,830,'c'],[408,617,688,837,922,'c'],[428,622,622,877,1015,'r'],[448,378,380,525,598,'r'],[472,115,203,640,640,'c'],[492,563,766,885,885,'r'],[512,810,923,985,985,'c'],[532,1018,1035,1083,1125,'c'],[556,893,893,1075,1090,'r'],[576,883,996,1020,1100,'r'],[596,955,987,1130,1165,'c'],[616,1062,1108,1133,1135,'r'],[640,960,1045,1120,1120,'r'],[660,1000,1055,1078,1138,'r'],[680,910,973,1058,1060,'r'],[700,990,1018,1095,1095,'c'],[720,1035,1060,1098,1125,'c'],[744,1155,1157,1243,1260,'c'],[764,1225,1265,1282,1305,'c'],[784,1248,1262,1265,1310,'c'],[804,1265,1265,1373,1382,'c'],[828,1315,1315,1353,1353,'r'],[848,1297,1298,1335,1335,'c'],[868,1272,1298,1350,1350,'r'],[888,1158,1240,1257,1272,'r'],[908,1207,1230,1238,1310,'c'],[932,1248,1248,1270,1270,'r'],[952,1250,1252,1318,1322,'c'],[972,1315,1315,1390,1392,'c'],[992,1278,1332,1375,1378,'r'],[1016,1320,1328,1403,1435,'c'],[1036,1360,1392,1420,1443,'r'],[1056,1340,1348,1395,1425,'c'],[1076,1395,1406,1418,1430,'r'],[1100,1285,1345,1390,1402,'r'],[1120,1262,1302,1352,1355,'c'],[1140,1360,1362,1425,1425,'c'],[1160,1267,1267,1416,1416,'r'],[1180,1091,1091,1092,1092,'w'],[1204,902,902,904,1060,'w'],[1224,722,835,970,970,'r'],[1244,618,618,714,714,'r'],[1264,375,375,552,607,'r'],[1288,365,370,638,638,'c'],[1308,527,740,805,873,'c'],[1328,830,878,890,1025,'c'],[1348,960,963,1018,1085,'c'],[1372,938,992,1130,1165,'r'],[1392,1040,1055,1100,1150,'c'],[1412,1105,1150,1210,1225,'c'],[1432,1225,1257,1320,1323,'c'],[1452,1290,1290,1298,1372,'r'],[1476,1170,1212,1290,1322,'r'],[1496,1115,1150,1177,1195,'r'],[1516,1112,1195,1245,1245,'r'],[1536,1000,1015,1170,1170,'r'],[1560,885,938,1030,1090,'r']],
    c: [[512,250,262,297,325,'c'],[519,282,300,325,345,'r'],[526,298,305,330,340,'c'],[533,315,335,352,358,'c'],[540,330,338,352,360,'c'],[547,320,335,360,365,'r'],[554,345,352,362,368,'r'],[561,345,350,372,378,'c'],[568,325,350,365,372,'r'],[575,340,355,375,380,'c'],[582,345,362,378,382,'c'],[589,310,325,350,355,'r'],[596,300,305,345,352,'r'],[603,292,298,330,345,'r'],[610,312,325,345,350,'r'],[617,318,335,355,362,'c'],[624,320,330,355,365,'r'],[631,325,335,360,372,'c'],[638,325,340,362,370,'r'],[645,352,358,395,402,'c'],[652,395,402,428,440,'c'],[659,395,400,430,442,'r'],[666,390,400,415,420,'r'],[673,375,385,408,412,'c'],[680,390,392,410,414,'r'],[687,385,392,405,408,'c'],[694,378,385,402,408,'r'],[701,382,388,398,403,'r'],[708,378,385,392,400,'c'],[715,375,385,392,398,'c'],[722,378,385,395,402,'c']],
    d: [[8,570,575,600,605,'c'],[26,443,445,558,560,'r'],[46,443,443,488,540,'c'],[65,500,508,545,550,'r'],[84,475,510,525,525,'r'],[102,445,472,512,515,'r'],[122,448,466,552,558,'c'],[142,495,497,563,563,'r'],[160,440,476,505,530,'r'],[177,340,370,435,465,'r'],[195,395,425,472,480,'c'],[215,408,452,480,510,'c'],[234,460,488,492,515,'c'],[252,505,512,520,582,'c'],[270,418,472,495,510,'c'],[290,490,520,532,555,'c'],[309,460,518,522,555,'w'],[328,353,353,500,500,'r'],[346,200,278,370,460,'r'],[366,308,357,360,420,'c'],[385,237,273,392,400,'r'],[403,305,305,357,357,'c'],[422,360,367,395,405,'c'],[441,345,382,393,398,'r'],[460,403,455,465,492,'r'],[478,445,455,487,497,'c'],[497,478,480,515,518,'c'],[516,482,493,523,542,'r'],[536,480,485,510,547,'c'],[555,485,490,510,518,'r'],[573,462,466,480,490,'r'],[590,452,480,513,515,'c'],[611,505,510,528,530,'c'],[630,518,525,542,545,'r'],[648,510,518,530,542,'r'],[665,503,510,537,555,'c'],[684,578,584,592,605,'c'],[705,565,566,595,595,'r'],[723,520,530,552,558,'c'],[741,555,562,568,583,'r'],[759,548,566,578,592,'c'],[780,545,550,595,595,'r'],[798,550,553,583,586,'c'],[817,590,592,650,654,'c'],[835,575,578,636,638,'r'],[855,535,545,570,572,'r'],[873,525,526,538,545,'c'],[892,535,540,548,550,'r'],[910,518,525,548,550,'r'],[928,503,503,528,530,'r'],[948,460,497,500,548,'w'],[967,403,467,515,515,'r'],[985,438,450,498,500,'r'],[1004,415,417,455,457,'c'],[1024,377,390,450,465,'r'],[1043,398,400,487,510,'c'],[1060,412,492,520,525,'c'],[1079,455,460,520,537,'r'],[1097,460,470,480,510,'c'],[1117,420,440,480,522,'r'],[1136,372,408,428,450,'r'],[1155,395,423,445,455,'r'],[1173,395,403,440,440,'c'],[1192,263,265,435,435,'r'],[1211,258,260,325,358,'c'],[1229,322,350,353,395,'c'],[1247,355,362,372,380,'r'],[1268,332,347,390,390,'c'],[1287,225,375,388,388,'r'],[1305,345,347,382,395,'r'],[1323,265,273,345,345,'r'],[1341,310,318,365,380,'c'],[1362,237,292,355,410,'r']]
  };

  function el(name, attrs, parent) {
    var n = document.createElementNS(NS, name);
    for (var k in attrs) n.setAttribute(k, attrs[k]);
    parent.appendChild(n);
    return n;
  }
  function pointsOf(parts) {
    var out = [];
    parts.forEach(function (p) {
      var s = SP[p[0]];
      for (var i = 0; i < p[1].length; i += 2) {
        out.push(s.x(p[1][i]).toFixed(1) + ',' + s.y(p[1][i + 1]).toFixed(1));
      }
    });
    return out.join(' ');
  }

  Object.keys(CANDLES).forEach(function (key) {
    var s = SP[key];
    CANDLES[key].forEach(function (c) {
      var x = s.x(c[0]), hi = s.y(c[1]), top = s.y(c[2]), bot = s.y(c[3]), lo = s.y(c[4]), k = c[5];
      if (k === 'w') {
        el('path', { 'class': 'w-wh', d: 'M' + (x - 3.5) + ' ' + top + 'H' + (x + 3.5) + (lo > top + 2 ? 'M' + x + ' ' + top + 'V' + lo : '') }, candlesG);
        return;
      }
      var wickClass = k === 'r' ? 'w-red' : 'w-cy';
      el('path', { 'class': wickClass, d: 'M' + x + ' ' + hi + 'V' + top + 'M' + x + ' ' + bot + 'V' + lo }, candlesG);
      var h = Math.max(bot - top, 2);
      if (k === 'r') {
        el('rect', { 'class': 'c-body', x: x - 3, y: top, width: 6, height: h }, candlesG);
      } else {
        el('rect', { 'class': 'c-fill', x: x - 4, y: top, width: 8, height: h }, candlesG);
      }
    });
  });

  var MA = [
    ['ma-m', [['a',[15,400,60,385,100,378,160,373,200,365,240,340,270,310,310,240,340,160,370,70,395,0]],['b',[398,1500,440,1360,490,1220,530,1130,590,1020,650,945,690,890,730,888,760,920,800,990,830,1020,870,1100,895,1140,940,1170,985,1215,1040,1250,1090,1290,1130,1330,1170,1335,1210,1300,1260,1200,1320,1125,1390,1080,1430,1075,1500,1045,1568,990]],['c',[545,305,570,325,610,335,650,355,690,385,720,375]],['d',[0,540,50,555,110,575,145,580,180,555,220,530,280,512,310,510,350,480,385,455,420,442,450,436,530,436,560,443,680,452,710,465,750,500,830,540,890,545,950,552,1000,540,1050,525,1110,510,1180,470,1210,455,1300,412,1360,393]]]],
    ['ma-g', [['a',[20,402,100,405,230,405,300,375,340,340,400,290,440,235,510,170,560,135,620,95,690,40,765,0]],['b',[765,1500,820,1475,910,1420,1000,1385,1060,1350,1120,1330,1210,1280,1300,1180,1380,1125,1450,1095,1568,1072]],['c',[560,320,600,323,650,335,700,340,720,340]],['d',[0,380,60,378,90,372,170,373,200,383,240,410,280,435,310,450,390,450,440,450,480,458,560,478,660,490,750,495,830,517,890,518,950,515,1020,498,1100,493,1130,487,1180,483,1220,478,1240,472,1310,470,1335,462,1360,463]]]],
    ['ma-y', [['a',[15,393,60,385,110,360,160,355,210,325,260,245,290,180,315,90,332,0]],['b',[333,1500,365,1250,400,1130,430,1000,450,870,490,745,515,727,555,750,590,830,630,890,650,950,690,1030,745,1065,780,1130,830,1180,880,1240,940,1290,1010,1315,1060,1325,1095,1345,1150,1375,1175,1370,1210,1290,1240,1180,1270,1030,1310,900,1360,825,1395,818,1415,850,1450,950,1490,1080,1520,1140,1568,1142]],['c',[520,318,545,340,570,345,590,335,620,350,650,378,680,400,700,395,725,380]],['d',[0,618,20,585,50,555,90,540,150,520,190,482,270,482,290,492,320,480,345,450,375,450,420,395,450,388,500,385,520,405,545,432,570,450,610,495,660,515,720,528,760,550,810,555,830,572,870,575,920,560,960,545,1000,510,1030,487,1070,487,1110,470,1150,453,1200,425,1250,392,1300,378,1362,335]]]],
    ['ma-w', [['a',[10,395,60,378,110,350,170,330,200,310,235,240,260,170,280,60,295,0]],['b',[295,1500,320,1300,340,1100,360,1000,380,870,405,780,430,680,450,632,490,645,512,685,540,830,560,920,580,990,605,1035,635,1040,660,1065,690,1065,730,1060,760,1110,790,1200,810,1270,840,1315,870,1320,905,1290,940,1275,980,1300,1015,1340,1040,1380,1070,1390,1140,1385,1160,1370,1190,1290,1210,1200,1230,1020,1250,840,1265,750,1285,670,1310,655,1340,690,1360,790,1385,950,1410,1060,1430,1135,1470,1215,1500,1235,1520,1225,1545,1110,1568,1085]],['c',[530,315,550,345,575,365,600,335,630,340,650,385,670,410,690,395,720,390]],['d',[0,598,20,560,50,550,65,520,100,485,120,510,150,505,180,475,215,452,240,458,270,480,300,510,325,490,345,440,370,415,385,360,402,328,440,355,462,375,480,430,510,470,540,492,590,495,620,507,660,520,690,545,740,565,780,562,820,587,880,580,920,550,960,510,1000,470,1025,450,1050,462,1080,462,1120,470,1150,440,1175,437,1200,385,1230,355,1265,342,1300,362,1325,345,1345,350,1360,335]]]]
  ];
  MA.forEach(function (m) {
    el('polyline', { 'class': 'ma ' + m[0], points: pointsOf(m[1]) }, linesG);
  });

  // Lower pane: green step line, coloured level segments, white oscillator.
  el('polyline', { 'class': 'sub-g', points: pointsOf([['e', [153,470,198,470,203,600,212,870,213,1003,219,800,227,470,240,470,248,700,258,1000,286,1000,293,780,300,470,900,470,905,600,915,1003,925,700,930,470,2630,470]]]) }, linesG);

  var SEGS = [
    ['r',8,205,890],['r',205,235,885],['r',235,278,881],['r',278,320,877],['r',320,345,873],['b',345,448,872],['b',448,520,875],['g',520,675,878],['g',675,800,881],['b',800,810,881],['r',810,850,881],['r',850,892,877],['r',892,932,873],['b',932,973,871],['g',973,997,873],['g',997,1063,877],['b',1063,1073,877],['r',1073,1122,877],['b',1122,1133,877],['g',1133,1260,877],['g',1260,1268,881],['b',1268,1280,881],['r',1280,1312,877],['b',1312,1340,877],['r',1340,1358,877],['b',1358,1368,877],['g',1368,1390,877],['g',1390,1581,881],
    ['r',1581,1739,881],['b',1739,1793,881],['r',1793,1922,881],['g',1922,2225,881],['r',2225,2387,881],['b',2387,2408,881],['r',2408,2631,881]
  ];
  SEGS.forEach(function (s) {
    el('path', { 'class': 'seg seg-' + s[0], d: 'M' + SP.e.x(s[1]) + ' ' + SP.e.y(s[3]) + 'H' + SP.e.x(s[2]) }, linesG);
  });

  el('polyline', { 'class': 'sub-w', points: pointsOf([
    ['e', [8,965,20,880,38,845,60,770,80,692,90,850,95,965,108,995,118,780,130,540,140,300,155,120,168,45,180,35,198,35,212,87,226,70,238,270,252,500,268,740,278,1050,286,1325,295,900,300,500,313,210,322,680,332,950,345,1170,358,1130,375,1000,388,920,400,1080,405,1190,418,1260,432,1342,448,1268,462,1295,475,1055,485,1300,492,1485,504,1518,512,1300,520,1032,535,1050,552,1040,565,1060,580,1095,593,1140,608,1065,622,1052,653,1062,660,1150,668,1265,681,1168,696,1300,711,1220,724,1235,739,1255,755,1237,770,1245,785,1355,798,1340,805,1100,815,850,825,470,842,325,850,490,857,628,870,330,885,265,895,750,903,1025,916,1085,930,995,944,1155,960,1105,975,1250,990,1130,1002,1040,1015,1035,1030,1050,1045,1085,1060,1235,1070,800,1077,620,1092,568,1098,820,1107,1170,1118,1168,1136,1245,1150,1228,1165,1248,1180,1205,1192,1190,1207,1118,1224,1290,1238,1312,1252,1147,1266,1245,1275,1000,1283,808,1298,1118,1310,1052,1325,1262,1342,1018,1355,1340,1370,1392,1385,1340,1398,1090,1412,995,1428,942,1442,1065,1456,960,1472,980,1490,980,1505,962,1517,962,1530,1020,1548,1105,1568,1160]],
    ['c', [726,800,736,692,745,770,755,800,768,860,772,862,780,790,790,685,797,810,805,855,815,882,832,905,845,750,850,645,862,740,868,800,878,860,890,880,905,858,925,875,940,885,950,885,965,895,972,870,985,885,1005,880,1015,885,1022,820,1030,880,1045,860,1060,830,1080,790,1088,810,1095,730,1105,870,1108,885,1125,800,1135,790,1145,810,1157,600,1165,720,1175,800,1185,840,1195,770,1204,692,1210,850,1218,730]]
  ]) }, linesG);
})();
```
